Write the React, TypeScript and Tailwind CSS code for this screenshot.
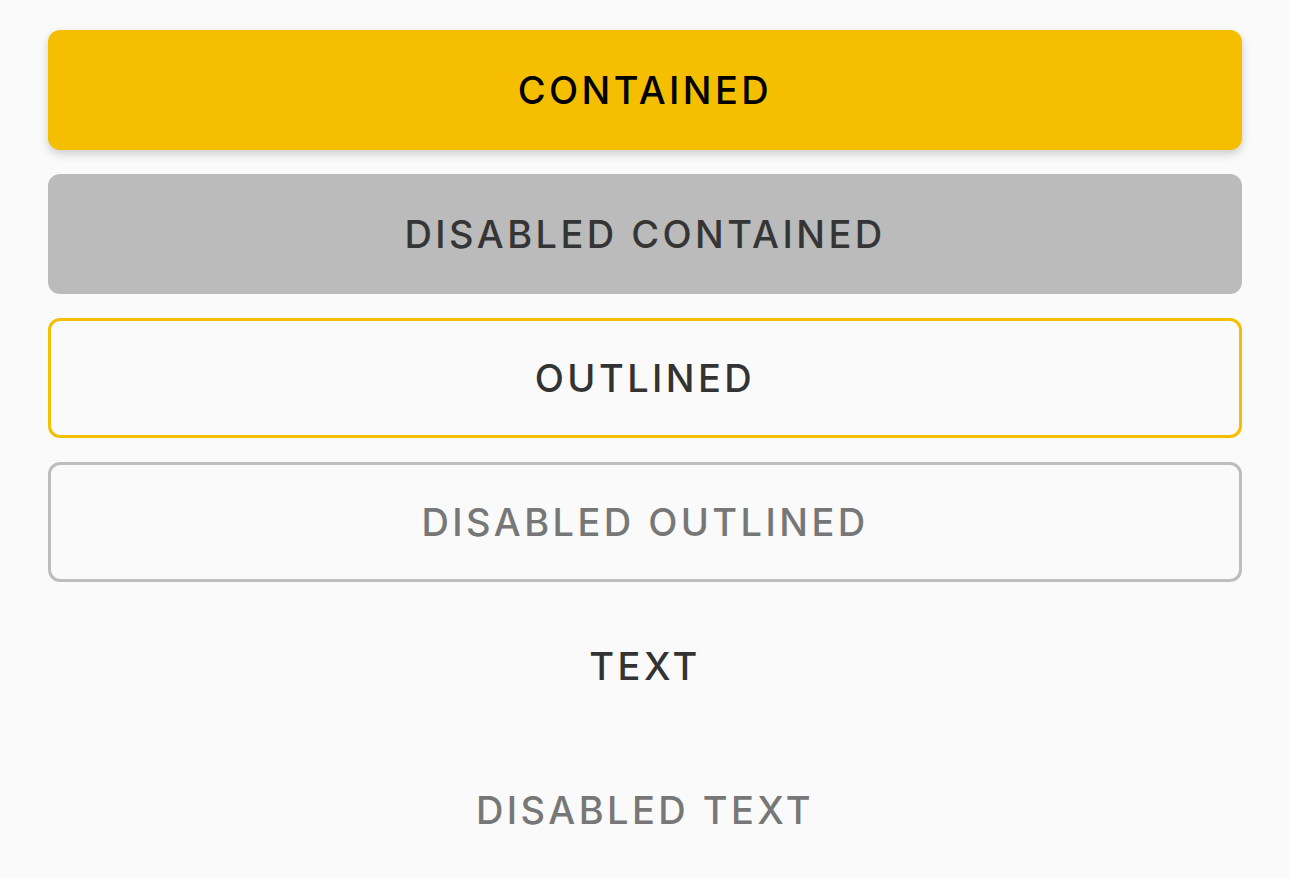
const base =
  "w-full h-[120px] rounded-[12px] flex items-center justify-center text-[38px] font-medium tracking-[0.09em] uppercase";

export default function App() {
  return (
    <main
      className="min-h-screen bg-[#fafafa] px-12 pt-[30px] flex flex-col gap-6"
      style={{ fontFamily: "Inter, 'Noto Sans', sans-serif" }}
    >
      <button className={`${base} bg-[#f5bf00] text-black shadow-[0_4px_10px_rgba(0,0,0,0.18)]`}>
        Contained
      </button>
      <button disabled className={`${base} bg-[#bbbbbb] text-[#353535]`}>
        Disabled Contained
      </button>
      <button className={`${base} border-[3px] border-[#f5bf00] text-[#333333]`}>
        Outlined
      </button>
      <button disabled className={`${base} border-[3px] border-[#bdbdbd] text-[#777777]`}>
        Disabled Outlined
      </button>
      <button className={`${base} text-[#333333]`}>Text</button>
      <button disabled className={`${base} text-[#777777]`}>
        Disabled Text
      </button>
    </main>
  );
}
